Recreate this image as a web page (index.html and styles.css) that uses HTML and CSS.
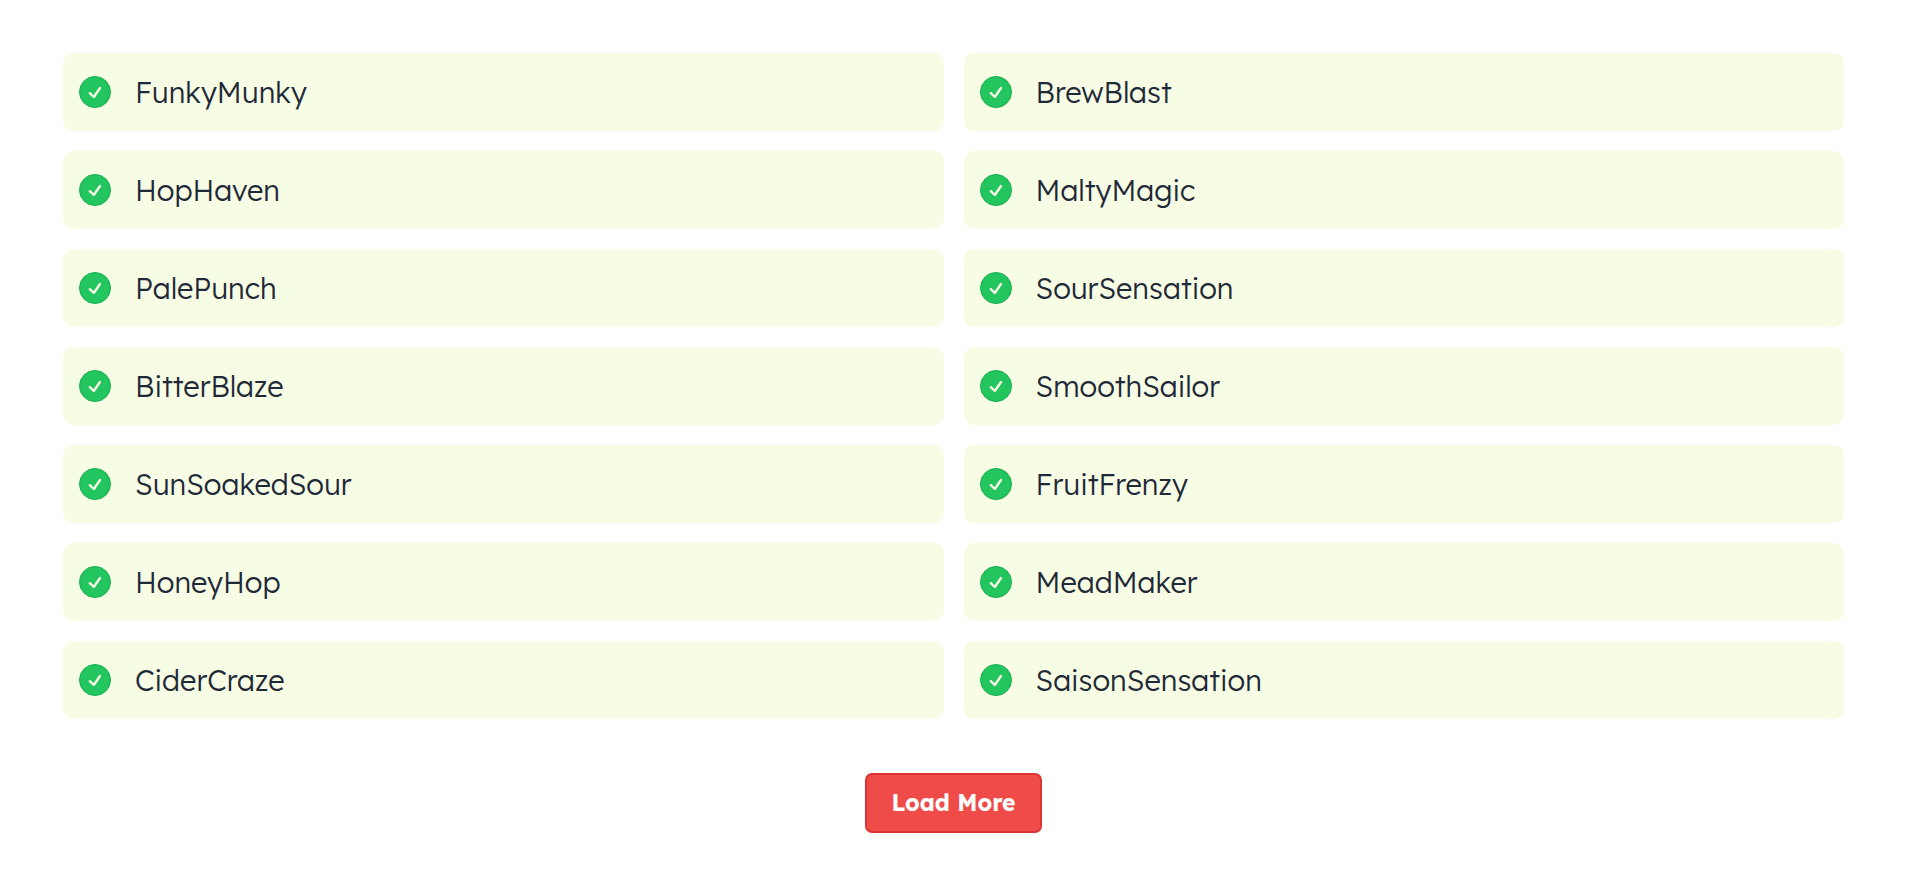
FILE: index.html
```html
<!DOCTYPE html>
<html lang="en">
<head>
  <meta charset="UTF-8">
  <meta name="viewport" content="width=device-width, initial-scale=1.0">
  <title>Beers</title>
  <link rel="stylesheet" href="styles.css">
</head>
<body>
  <!-- Check icon shared by all items -->
  <svg class="sprite" aria-hidden="true">
    <symbol id="check" viewBox="0 0 32 32">
      <circle class="check-circle" cx="16" cy="16" r="15.5"/>
      <path class="check-mark" d="M10.8 17.2l4 3.8 6.2-9"/>
    </symbol>
  </svg>

  <main class="container">
    <ul class="beer-list">
      <li class="beer"><svg class="icon"><use href="#check"/></svg>FunkyMunky</li>
      <li class="beer"><svg class="icon"><use href="#check"/></svg>BrewBlast</li>
      <li class="beer"><svg class="icon"><use href="#check"/></svg>HopHaven</li>
      <li class="beer"><svg class="icon"><use href="#check"/></svg>MaltyMagic</li>
      <li class="beer"><svg class="icon"><use href="#check"/></svg>PalePunch</li>
      <li class="beer"><svg class="icon"><use href="#check"/></svg>SourSensation</li>
      <li class="beer"><svg class="icon"><use href="#check"/></svg>BitterBlaze</li>
      <li class="beer"><svg class="icon"><use href="#check"/></svg>SmoothSailor</li>
      <li class="beer"><svg class="icon"><use href="#check"/></svg>SunSoakedSour</li>
      <li class="beer"><svg class="icon"><use href="#check"/></svg>FruitFrenzy</li>
      <li class="beer"><svg class="icon"><use href="#check"/></svg>HoneyHop</li>
      <li class="beer"><svg class="icon"><use href="#check"/></svg>MeadMaker</li>
      <li class="beer"><svg class="icon"><use href="#check"/></svg>CiderCraze</li>
      <li class="beer"><svg class="icon"><use href="#check"/></svg>SaisonSensation</li>
    </ul>

    <button type="button" class="load-more">Load More</button>
  </main>
</body>
</html>
```

FILE: styles.css
```css
* {
  box-sizing: border-box;
}

body {
  margin: 0;
  background-color: #fff;
  color: #1f2937;
  font-family: Lexend, Inter, sans-serif;
}

.sprite {
  display: none;
}

.container {
  display: flex;
  flex-direction: column;
  align-items: center;
  gap: 54px;
  padding: 53px 76px 53px 63px;
}

.beer-list {
  display: grid;
  grid-template-columns: 1fr 1fr;
  gap: 20px;
  width: 100%;
  margin: 0;
  padding: 0;
  list-style: none;
}

.beer {
  display: flex;
  align-items: center;
  gap: 24px;
  padding: 19px 16px;
  border-radius: 10px;
  background-color: #f7fce5;
  font-size: 29px;
  font-weight: 300;
  line-height: 40px;
}

.icon {
  flex: none;
  width: 32px;
  height: 32px;
}

.check-circle {
  fill: #22c55e;
  stroke: #16b050;
  stroke-width: 1;
}

.check-mark {
  fill: none;
  stroke: #f7fce5;
  stroke-width: 2.4;
  stroke-linecap: round;
  stroke-linejoin: round;
}

.load-more {
  padding: 12px 24px;
  border: 2px solid #dc3434;
  border-radius: 7px;
  background-color: #ef4b48;
  color: #fff;
  font-family: inherit;
  font-size: 23px;
  font-weight: 700;
  line-height: 32px;
  cursor: pointer;
}

.load-more:hover {
  background-color: #dc3434;
}
```
